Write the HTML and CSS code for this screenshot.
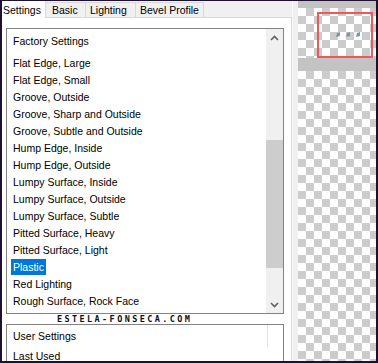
FILE: index.html
```html
<!DOCTYPE html>
<html lang="en">
<head>
    <meta charset="UTF-8">
    <title>Bevel Settings</title>
    <link rel="stylesheet" href="styles.css">
</head>
<body>
    <div class="frame">
        <div class="left">
            <div class="tabs">
                <div class="tab active">Settings</div>
                <div class="tab basic">Basic</div>
                <div class="tab lighting">Lighting</div>
                <div class="tab bevel">Bevel Profile</div>
            </div>
            <div class="panel">
                <div class="listbox main">
                    <div class="items">
                        <div class="group">Factory Settings</div>
                        <div class="item"><span>Flat Edge, Large</span></div>
                        <div class="item"><span>Flat Edge, Small</span></div>
                        <div class="item"><span>Groove, Outside</span></div>
                        <div class="item"><span>Groove, Sharp and Outside</span></div>
                        <div class="item"><span>Groove, Subtle and Outside</span></div>
                        <div class="item"><span>Hump Edge, Inside</span></div>
                        <div class="item"><span>Hump Edge, Outside</span></div>
                        <div class="item"><span>Lumpy Surface, Inside</span></div>
                        <div class="item"><span>Lumpy Surface, Outside</span></div>
                        <div class="item"><span>Lumpy Surface, Subtle</span></div>
                        <div class="item"><span>Pitted Surface, Heavy</span></div>
                        <div class="item"><span>Pitted Surface, Light</span></div>
                        <div class="item selected"><span>Plastic</span></div>
                        <div class="item"><span>Red Lighting</span></div>
                        <div class="item"><span>Rough Surface, Rock Face</span></div>
                    </div>
                    <div class="scrollbar">
                        <div class="arrow">
                            <svg width="9" height="6" viewBox="0 0 9 6"><path d="M1 5 L4.5 1.5 L8 5" fill="none" stroke="#606060" stroke-width="1.6"/></svg>
                        </div>
                        <div class="track">
                            <div class="thumb"></div>
                        </div>
                        <div class="arrow">
                            <svg width="9" height="6" viewBox="0 0 9 6"><path d="M1 1 L4.5 4.5 L8 1" fill="none" stroke="#606060" stroke-width="1.6"/></svg>
                        </div>
                    </div>
                </div>
                <div class="watermark">ESTELA-FONSECA.COM</div>
                <div class="listbox user">
                    <div class="items">
                        <div class="group">User Settings</div>
                        <div class="group">Last Used</div>
                    </div>
                    <div class="scrollbar empty"></div>
                </div>
            </div>
        </div>
        <div class="gap"></div>
        <div class="preview">
            <div class="strip"></div>
            <div class="checker top">
                <div class="marquee">
                    <svg width="28" height="7" viewBox="0 0 28 7">
                        <path d="M1 6 L2 2 L5 1 L5 5 Z" fill="#7d97a3"/>
                        <path d="M11 6 L12 2 L15 1 L15 5 Z" fill="#7d97a3"/>
                        <path d="M21 6 L22 2 L25 1 L25 5 Z" fill="#7d97a3"/>
                    </svg>
                </div>
            </div>
            <div class="band"></div>
            <div class="checker rest"></div>
        </div>
    </div>
</body>
</html>
```

FILE: styles.css
```css
* {
    margin: 0;
    padding: 0;
    box-sizing: border-box;
}

body {
    width: 378px;
    height: 363px;
    overflow: hidden;
    font-family: "Liberation Sans", Arial, sans-serif;
    font-size: 10.5px;
    color: #000;
}

.frame {
    width: 378px;
    height: 363px;
    display: flex;
    border-style: solid;
    border-color: #1e1030;
    border-width: 1px 2px 2px 2px;
    background: #f0f0f0;
    overflow: hidden;
}

/* left side */
.left {
    width: 290px;
    display: flex;
    flex-direction: column;
}

.tabs {
    height: 16px;
    display: flex;
    align-items: flex-end;
}

.tab {
    height: 15px;
    display: flex;
    align-items: center;
    padding-left: 4px;
    background: #f0f0f0;
    border: 1px solid #d9d9d9;
    border-bottom: none;
    border-left: none;
}

.tab.active {
    height: 17px;
    width: 44px;
    padding-left: 1px;
    background: #fff;
    margin-bottom: -1px;
    z-index: 1;
    border-top: none;
}

.tab.basic { width: 40px; padding-left: 6px; }
.tab.lighting { width: 50px; }
.tab.bevel { width: 68px; }

.panel {
    flex: 1;
    background: #fff;
    border-top: 1px solid #d9d9d9;
    border-right: 1px solid #d9d9d9;
    padding: 10px 0 0 4px;
    display: flex;
    flex-direction: column;
}

.listbox {
    width: 278px;
    border: 1px solid #828282;
    background: #fff;
    display: flex;
}

.listbox.main {
    height: 286px;
}

.items {
    flex: 1;
}

.group {
    height: 17px;
    line-height: 17px;
    padding-left: 6px;
    margin-top: 4px;
}

.main .group {
    margin-bottom: 4px;
}

.user .group {
    margin-top: 3px;
    height: 17px;
}

.item {
    height: 17px;
    display: flex;
    align-items: center;
    padding-left: 4px;
}

.item span {
    padding: 1px 2px;
    line-height: 14px;
}

.item.selected span {
    background: #0078d7;
    color: #fff;
    height: 16px;
    line-height: 14px;
}

.scrollbar {
    width: 17px;
    background: #f0f0f0;
    display: flex;
    flex-direction: column;
}

.scrollbar .arrow {
    height: 17px;
    display: flex;
    align-items: center;
    justify-content: center;
}

.track {
    flex: 1;
    padding-top: 94px;
}

.thumb {
    height: 128px;
    background: #cdcdcd;
}

.scrollbar.empty {
    width: 16px;
    height: 22px;
    background: #fff;
    border-left: 1px solid #e6e6e6;
}

.watermark {
    height: 10px;
    line-height: 10px;
    padding-left: 51px;
    font-family: "DejaVu Sans Mono", monospace;
    font-weight: bold;
    font-size: 8.5px;
    letter-spacing: 2.4px;
    color: #111;
}

.listbox.user {
    flex: 1;
}

/* right side */
.gap {
    width: 6px;
    border-left: 1px solid #fafafa;
}

.preview {
    flex: 1;
    display: flex;
    flex-direction: column;
    background: #c3c3c3;
}

.strip {
    height: 7px;
}

.band {
    height: 13px;
}

.checker {
    background-color: #fff;
    background-image: conic-gradient(#cccccc 25%, #fff 0 50%, #cccccc 0 75%, #fff 0);
    background-size: 16px 16px;
}

.checker.top {
    height: 50px;
    padding: 4px 0 0 19px;
}

.checker.rest {
    flex: 1;
}

.marquee {
    width: 56px;
    height: 46px;
    border: 2px solid #f25757;
    padding: 17px 0 0 16px;
}

.marquee svg {
    display: block;
}
```
